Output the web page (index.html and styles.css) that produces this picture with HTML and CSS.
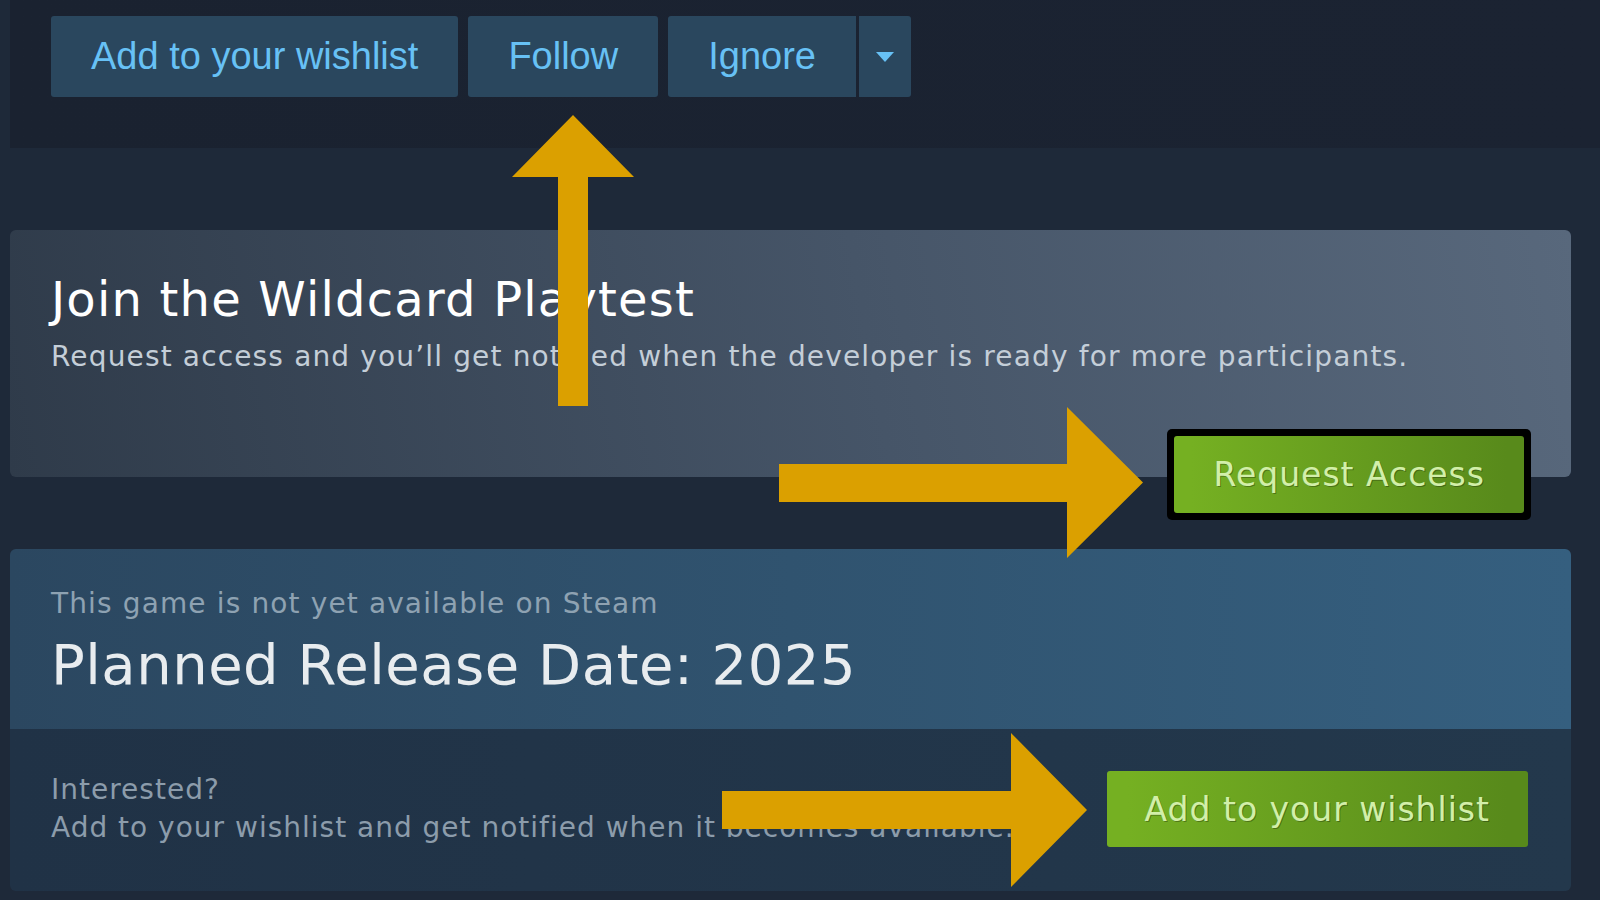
FILE: index.html
```html
<!DOCTYPE html>
<html lang="en">
<head>
    <meta charset="UTF-8">
    <meta name="viewport" content="width=device-width, initial-scale=1.0">
    <title>Wildcard on Steam</title>
    <link rel="stylesheet" href="styles.css">
</head>
<body>

<div class="queue">
    <div class="queue-buttons">
        <a class="btn-blue">Add to your wishlist</a>
        <a class="btn-blue">Follow</a>
        <div class="ignore-group">
            <a class="btn-blue ignore">Ignore</a>
            <a class="btn-blue dropdown">
                <svg width="18" height="10" viewBox="0 0 18 10"><polygon points="0,0 18,0 9,10" fill="#67c1f5"/></svg>
            </a>
        </div>
    </div>
</div>

<div class="content">
    <div class="playtest">
        <h2>Join the Wildcard Playtest</h2>
        <p>Request access and you’ll get notified when the developer is ready for more participants.</p>
        <div class="playtest-actions">
            <div class="focus-ring">
                <a class="btn-green request">Request Access</a>
            </div>
        </div>
    </div>

    <div class="release">
        <div class="release-top">
            <div class="not-available">This game is not yet available on Steam</div>
            <h1>Planned Release Date: 2025</h1>
        </div>
        <div class="release-bottom">
            <div class="interested">
                <div>Interested?</div>
                <div>Add to your wishlist and get notified when it becomes available.</div>
            </div>
            <a class="btn-green wishlist">Add to your wishlist</a>
        </div>
    </div>
</div>

<!-- annotation arrows drawn over the page -->
<svg class="arrows" width="1600" height="900" viewBox="0 0 1600 900">
    <polygon points="573,115 634,177 588,177 588,406 558,406 558,177 512,177"/>
    <polygon points="779,464 1067,464 1067,407 1143,482.5 1067,558 1067,502 779,502"/>
    <polygon points="722,791 1011,791 1011,733 1087,810 1011,887 1011,829 722,829"/>
</svg>

</body>
</html>
```

FILE: styles.css
```css
body {
    margin: 0;
    height: 900px;
    overflow: hidden;
    position: relative;
    background-color: #1e2939;
    font-family: "DejaVu Sans", sans-serif;
}
.queue {
    margin-left: 10px;
    height: 148px;
    box-sizing: border-box;
    padding: 16px 0 0 41px;
    background: linear-gradient(to right, #1a2230, #1b2332);
}
.queue-buttons {
    display: flex;
    gap: 10px;
}
.btn-blue {
    display: flex;
    align-items: center;
    height: 81px;
    padding: 0 40px;
    background-color: #2a475e;
    color: #67c1f5;
    font-family: "Liberation Sans", Arial, sans-serif;
    font-size: 38px;
    border-radius: 3px;
}
.ignore-group {
    display: flex;
    gap: 3px;
}
.ignore-group .ignore {
    border-radius: 3px 0 0 3px;
}
.ignore-group .dropdown {
    width: 52px;
    padding: 0;
    justify-content: center;
    border-radius: 0 3px 3px 0;
}
.content {
    padding: 82px 29px 0 10px;
}
.playtest {
    height: 247px;
    box-sizing: border-box;
    padding: 41px 40px 0 41px;
    border-radius: 6px;
    background: linear-gradient(80deg, #2f3b4a 0%, #465568 55%, #58687c 100%);
}
.playtest h2 {
    margin: 0;
    font-size: 48px;
    line-height: 56px;
    font-weight: normal;
    letter-spacing: 1.2px;
    color: #ffffff;
}
.playtest p {
    margin: 13px 0 0;
    font-size: 28px;
    line-height: 34px;
    letter-spacing: 1.15px;
    color: #c4ced8;
}
.playtest-actions {
    display: flex;
    justify-content: flex-end;
    margin-top: 55px;
}
.focus-ring {
    padding: 7px;
    background-color: #000;
    border-radius: 5px;
}
.btn-green {
    display: flex;
    align-items: center;
    justify-content: center;
    color: #d2efa9;
    font-size: 33px;
    letter-spacing: 1px;
    background: linear-gradient(to right, #75b022 5%, #588a1b 95%);
    border-radius: 3px;
    text-shadow: 1px 1px 0 rgba(0, 0, 0, 0.3);
}
.btn-green.request {
    height: 77px;
    padding: 0 39px;
}
.release {
    margin-top: 72px;
    border-radius: 6px;
    overflow: hidden;
}
.release-top {
    padding: 38px 41px 31px;
    background: linear-gradient(to right, #2b4760 0%, #30536f 50%, #355f7f 100%);
}
.not-available {
    font-size: 28px;
    line-height: 34px;
    letter-spacing: 1.13px;
    color: #8ea2b2;
}
.release-top h1 {
    margin: 11px 0 0;
    font-size: 56px;
    line-height: 66px;
    font-weight: normal;
    letter-spacing: 0.5px;
    color: #e8ecef;
}
.release-bottom {
    display: flex;
    align-items: center;
    padding: 42px 43px 44px 41px;
    background: linear-gradient(to right, #203246, #23384c);
}
.interested {
    flex: 1;
    min-width: 0;
    font-size: 28px;
    line-height: 38px;
    letter-spacing: 1px;
    white-space: nowrap;
    color: #8c9cab;
}
.btn-green.wishlist {
    height: 76px;
    padding: 0 38px;
}
.arrows {
    position: absolute;
    left: 0;
    top: 0;
    pointer-events: none;
    fill: #dba000;
}
```
